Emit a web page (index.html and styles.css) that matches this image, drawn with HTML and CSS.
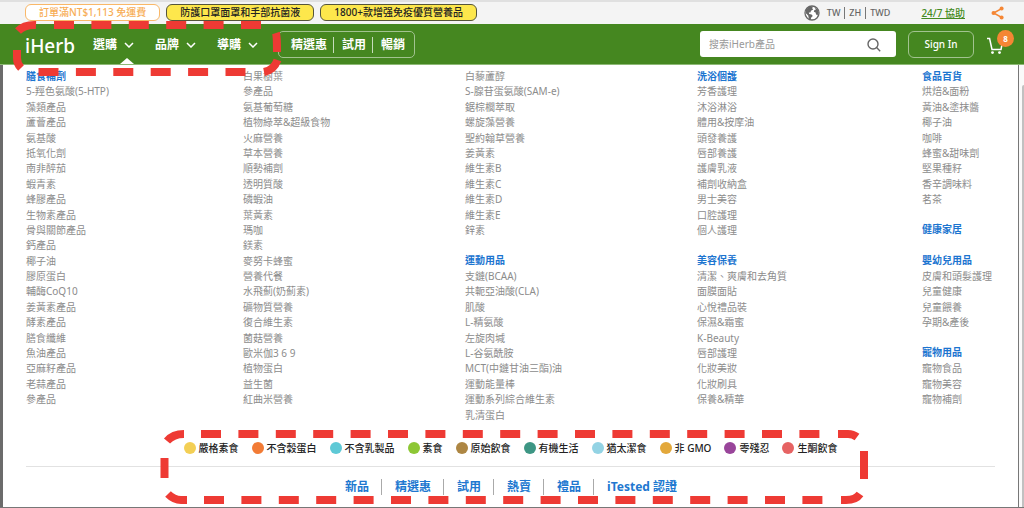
FILE: index.html
```html
<!DOCTYPE html>
<html lang="zh-Hant">
<head>
<meta charset="utf-8">
<title>iHerb</title>
<link rel="stylesheet" href="styles.css">
</head>
<body>
<div class="topbar">
  <div class="promos">
    <a class="pill pill-plain" href="#">訂單滿NT$1,113 免運費</a>
    <a class="pill" href="#">防護口罩面罩和手部抗菌液</a>
    <a class="pill" href="#">1800+款增强免疫優質營養品</a>
  </div>
  <div class="utility">
    <button class="locale" type="button">
      <svg class="globe" viewBox="0 0 16 16" aria-hidden="true"><circle cx="8" cy="8" r="7" fill="#fff" stroke="#666" stroke-width="1.3"/><path d="M2 4.5 5 1.8 9 1.4 8.2 3.2 9.2 4.6 7 5.8 6.4 7.4 4.8 7.6 5.2 9 7.6 9.4 8.8 11 7.2 12.6 6.6 15 4.8 13.4 4.2 10.6 1.6 8Z" fill="#666"/><path d="M10.2 2.2 13.6 4.2 14.8 7.6 13.4 10.6 12 9.2 11.6 7.6 9.8 6.8 10.4 5 12 4.4Z" fill="#666"/></svg>
      <span>TW</span><span>ZH</span><span>TWD</span>
    </button>
    <a class="help" href="#">24/7 協助</a>
    <button class="icon-btn" type="button" aria-label="分享">
      <svg class="share" viewBox="0 0 13 14" aria-hidden="true"><path d="M10.6 2.6 2.6 7l8 4.4" fill="none" stroke="#f58634" stroke-width="1.6"/><circle cx="10.6" cy="2.6" r="2" fill="#f58634"/><circle cx="2.6" cy="7" r="2.1" fill="#f58634"/><circle cx="10.6" cy="11.4" r="2" fill="#f58634"/></svg>
    </button>
  </div>
</div>

<header class="header">
  <a class="logo" href="#">iHerb<span class="dot"></span></a>
  <nav class="nav">
    <button class="nav-item active" type="button">選購<svg viewBox="0 0 10 6" aria-hidden="true"><path d="m1 1 4 4 4-4"/></svg></button>
    <button class="nav-item" type="button">品牌<svg viewBox="0 0 10 6" aria-hidden="true"><path d="m1 1 4 4 4-4"/></svg></button>
    <button class="nav-item" type="button">導購<svg viewBox="0 0 10 6" aria-hidden="true"><path d="m1 1 4 4 4-4"/></svg></button>
  </nav>
  <div class="quick"><a href="#">精選惠</a><a href="#">試用</a><a href="#">暢銷</a></div>
  <form class="search">
    <input type="text" placeholder="搜索iHerb產品" aria-label="搜索iHerb產品">
    <button class="icon-btn" type="button" aria-label="搜索"><svg class="lens" viewBox="0 0 14 14" aria-hidden="true"><circle cx="6" cy="6" r="5"/><path d="m9.6 9.6 3.6 3.6"/></svg></button>
  </form>
  <button class="signin" type="button">Sign In</button>
  <a class="cart" href="#" aria-label="購物車">
    <svg viewBox="0 0 16 18" aria-hidden="true"><path d="M0 1.500h2.600L5 12.500h9l1.400-7" fill="none" stroke="#fff" stroke-width="1.500"/><circle cx="5.500" cy="15.600" r="1.400" fill="#fff"/><circle cx="12.500" cy="15.600" r="1.400" fill="#fff"/></svg>
    <span class="badge">8</span>
  </a>
</header>

<main class="stage">
  <div class="panel">
    <div class="menu">
      <ul class="col">
        <li class="title"><a href="#">膳食補劑</a></li><li><a href="#">5-羥色氨酸(5-HTP)</a></li><li><a href="#">藻類產品</a></li><li><a href="#">蘆薈產品</a></li><li><a href="#">氨基酸</a></li><li><a href="#">抵氧化劑</a></li><li><a href="#">南非醉茄</a></li><li><a href="#">蝦青素</a></li><li><a href="#">蜂膠產品</a></li><li><a href="#">生物素產品</a></li><li><a href="#">骨與關節產品</a></li><li><a href="#">鈣產品</a></li><li><a href="#">椰子油</a></li><li><a href="#">膠原蛋白</a></li><li><a href="#">輔酶CoQ10</a></li><li><a href="#">姜黃素產品</a></li><li><a href="#">酵素產品</a></li><li><a href="#">膳食纖維</a></li><li><a href="#">魚油產品</a></li><li><a href="#">亞麻籽產品</a></li><li><a href="#">老蒜產品</a></li><li><a href="#">參產品</a></li>
      </ul>
      <ul class="col">
        <li><a href="#">白果樹葉</a></li><li><a href="#">參產品</a></li><li><a href="#">氨基葡萄糖</a></li><li><a href="#">植物綠萃&amp;超級食物</a></li><li><a href="#">火麻營養</a></li><li><a href="#">草本營養</a></li><li><a href="#">順勢補劑</a></li><li><a href="#">透明質酸</a></li><li><a href="#">磷蝦油</a></li><li><a href="#">葉黃素</a></li><li><a href="#">瑪咖</a></li><li><a href="#">鎂素</a></li><li><a href="#">麥努卡蜂蜜</a></li><li><a href="#">營養代餐</a></li><li><a href="#">水飛薊(奶薊素)</a></li><li><a href="#">礦物質營養</a></li><li><a href="#">復合維生素</a></li><li><a href="#">菌菇營養</a></li><li><a href="#">歐米伽3 6 9</a></li><li><a href="#">植物蛋白</a></li><li><a href="#">益生菌</a></li><li><a href="#">紅曲米營養</a></li>
      </ul>
      <ul class="col">
        <li><a href="#">白藜蘆醇</a></li><li><a href="#">S-腺苷蛋氨酸(SAM-e)</a></li><li><a href="#">鋸棕櫚萃取</a></li><li><a href="#">螺旋藻營養</a></li><li><a href="#">聖約翰草營養</a></li><li><a href="#">姜黃素</a></li><li><a href="#">維生素B</a></li><li><a href="#">維生素C</a></li><li><a href="#">維生素D</a></li><li><a href="#">維生素E</a></li><li><a href="#">鋅素</a></li>
        <li class="title"><a href="#">運動用品</a></li><li><a href="#">支鏈(BCAA)</a></li><li><a href="#">共軛亞油酸(CLA)</a></li><li><a href="#">肌酸</a></li><li><a href="#">L-精氨酸</a></li><li><a href="#">左旋肉堿</a></li><li><a href="#">L-谷氨酰胺</a></li><li><a href="#">MCT(中鏈甘油三酯)油</a></li><li><a href="#">運動能量棒</a></li><li><a href="#">運動系列綜合維生素</a></li><li><a href="#">乳清蛋白</a></li>
      </ul>
      <ul class="col">
        <li class="title"><a href="#">洗浴個護</a></li><li><a href="#">芳香護理</a></li><li><a href="#">沐浴淋浴</a></li><li><a href="#">體用&amp;按摩油</a></li><li><a href="#">頭發養護</a></li><li><a href="#">唇部養護</a></li><li><a href="#">護膚乳液</a></li><li><a href="#">補劑收納盒</a></li><li><a href="#">男士美容</a></li><li><a href="#">口腔護理</a></li><li><a href="#">個人護理</a></li>
        <li class="title"><a href="#">美容保養</a></li><li><a href="#">清潔、爽膚和去角質</a></li><li><a href="#">面膜面貼</a></li><li><a href="#">心悅禮品裝</a></li><li><a href="#">保濕&amp;霜蜜</a></li><li><a href="#">K-Beauty</a></li><li><a href="#">唇部護理</a></li><li><a href="#">化妝美妝</a></li><li><a href="#">化妝刷具</a></li><li><a href="#">保養&amp;精華</a></li>
      </ul>
      <ul class="col">
        <li class="title"><a href="#">食品百貨</a></li><li><a href="#">烘焙&amp;面粉</a></li><li><a href="#">黃油&amp;塗抹醬</a></li><li><a href="#">椰子油</a></li><li><a href="#">咖啡</a></li><li><a href="#">蜂蜜&amp;甜味劑</a></li><li><a href="#">堅果種籽</a></li><li><a href="#">香辛調味料</a></li><li><a href="#">茗茶</a></li>
        <li class="title"><a href="#">健康家居</a></li>
        <li class="title"><a href="#">嬰幼兒用品</a></li><li><a href="#">皮膚和頭髮護理</a></li><li><a href="#">兒童健康</a></li><li><a href="#">兒童餵養</a></li><li><a href="#">孕期&amp;產後</a></li>
        <li class="title"><a href="#">寵物用品</a></li><li><a href="#">寵物食品</a></li><li><a href="#">寵物美容</a></li><li><a href="#">寵物補劑</a></li>
      </ul>
    </div>
    <ul class="diets">
      <li class="vegan"><a href="#">嚴格素食</a></li><li class="gluten"><a href="#">不含穀蛋白</a></li><li class="dairy"><a href="#">不含乳製品</a></li><li class="veg"><a href="#">素食</a></li><li class="paleo"><a href="#">原始飲食</a></li><li class="organic"><a href="#">有機生活</a></li><li class="kosher"><a href="#">猶太潔食</a></li><li class="gmo"><a href="#">非 GMO</a></li><li class="cruelty"><a href="#">零殘忍</a></li><li class="keto"><a href="#">生酮飲食</a></li>
    </ul>
    <nav class="links"><a href="#">新品</a><a href="#">精選惠</a><a href="#">試用</a><a href="#">熱賣</a><a href="#">禮品</a><a href="#">iTested 認證</a></nav>
  </div>
  <div class="scroll"></div>
</main>

<svg class="marks" width="1024" height="508" viewBox="0 0 1024 508" aria-hidden="true">
  <path d="M18 31Q24 24.500 36 25"/>
  <path class="dash" d="M54 25H262"/>
  <path d="M276 33Q277 36 277 52M277.500 60Q274 70 264 72M17 50V58Q17 64 21 68"/>
  <path class="dash" d="M38.500 72H246"/>
  <path d="M167 441Q173 434 184 434M838 434H848Q853 434 857 437M864 451V479M860 494Q856 500 846 500H841M187 500H181Q174 500 168 494M164.500 458V478"/>
  <path class="dash" d="M201 434H821"/>
  <path class="dash" d="M204 500H824"/>
</svg>
</body>
</html>
```
FILE: styles.css
```css
* { box-sizing: border-box; }
body {
  margin: 0;
  min-height: 100vh;
  display: flex;
  flex-direction: column;
  position: relative;
  background: #fff;
  color: #222;
  font: 10px/14px "Noto Sans", "Noto Sans CJK TC", sans-serif;
}
a { color: inherit; text-decoration: none; }
button { font: inherit; color: inherit; background: none; border: 0; padding: 0; }
svg { display: block; flex: none; }
ul { list-style: none; margin: 0; padding: 0; }

.topbar {
  height: 24px;
  padding: 2px 20px 0 25px;
  border-top: 2px solid #e0e0e0;
  background: #f4f4f4;
  display: flex;
  align-items: flex-start;
  justify-content: space-between;
}
.promos { display: flex; gap: 6px; }
.pill {
  height: 17px;
  padding: 0 13px;
  border: 1px solid #55553a;
  border-radius: 6px;
  background: #fde74c;
  color: #222;
  font-weight: 500;
  line-height: 15px;
}
.pill-plain { border-color: #f9b869; background: #fff; color: #f7ad55; }
.utility { display: flex; align-items: center; height: 17px; color: #666; }
.locale { display: flex; align-items: center; font-size: 9px; font-weight: 500; line-height: 12px; }
.globe { width: 16px; height: 16px; margin-right: 3px; }
.locale span { padding: 0 4px; }
.locale span + span { border-left: 1px solid #777; }
.help { margin: 0 26px 0 27px; color: #458b22; font-weight: 500; text-decoration: underline; }
.share { width: 13px; height: 14px; }

.header {
  height: 41px;
  padding: 0 21px 0 25px;
  background: #458720;
  border-bottom: 1px solid #8db975;
  color: #fff;
  display: flex;
  align-items: center;
}
.logo { display: flex; width: 50px; font-size: 19px; font-weight: 500; line-height: 26px; padding-top: 4px; }
.dot { width: 1px; height: 1px; margin-top: 4px; background: #fff; }
.nav { display: flex; gap: 21px; align-self: stretch; margin-left: 18px; }
.nav-item {
  position: relative;
  display: flex;
  align-items: center;
  gap: 7px;
  padding-top: 2px;
  font-size: 12px;
  font-weight: 700;
}
.nav-item svg { width: 10px; height: 6px; fill: none; stroke: #fff; stroke-width: 1.5; }
.active::after {
  content: "";
  position: absolute;
  right: 0;
  bottom: 0;
  border: 7px solid transparent;
  border-top: 0;
  border-bottom: 6px solid #fff;
}
.quick {
  display: flex;
  align-items: center;
  height: 27px;
  margin-left: 20px;
  padding: 1px 3px 0 4px;
  border: 1px solid #a2c390;
  border-radius: 5px;
  font-size: 12px;
  font-weight: 700;
}
.quick a { padding: 0 6px 0 8px; line-height: 16px; }
.quick a + a { border-left: 1px solid #c7dcbc; }
.search {
  display: flex;
  align-items: center;
  width: 196px;
  height: 26px;
  margin-left: auto;
  padding: 0 15px 0 9px;
  border-radius: 3px;
  background: #fff;
}
.search input {
  flex: 1;
  min-width: 0;
  padding: 0;
  border: 0;
  outline: 0;
  font: inherit;
}
.search input::placeholder { color: #999; }
.lens { width: 14px; height: 14px; margin-top: 2px; fill: none; stroke: #666; stroke-width: 1.4; }
.signin {
  width: 66px;
  height: 27px;
  margin-left: 12px;
  border: 1px solid #a2c390;
  border-radius: 6px;
  font-weight: 500;
}
.cart { position: relative; margin-left: 13px; }
.cart svg { width: 16px; height: 18px; margin-top: 3px; }
.badge {
  position: absolute;
  top: -4px;
  left: 10px;
  width: 17px;
  height: 17px;
  border-radius: 50%;
  background: #f58634;
  font-size: 8px;
  font-weight: 700;
  line-height: 17px;
  text-align: center;
}

.stage { flex: 1; display: flex; border-bottom: 1px solid #777; background: #fafafa; }
.panel {
  flex: 1;
  padding: 4px 23px 0;
  border-left: 3px solid #6b6b6b;
  border-right: 1px solid #777;
  background: #fff;
}
.scroll { width: 5px; padding-top: 20px; }
.scroll::after { content: ""; display: block; height: 100%; margin-left: 3px; border-radius: 3px 0 0 0; background: #c1c1c1; }
.menu {
  display: grid;
  grid-template-columns: 217fr 222fr 232fr 225fr 73fr;
  min-height: 354px;
  color: #8c8c8c;
}
.col { display: grid; grid-template-rows: repeat(23, 1fr); white-space: nowrap; }
.title { color: #1c75d0; font-weight: 700; }
li + .title { grid-row: span 2; align-self: end; padding-bottom: 2px; }
.diets {
  display: flex;
  justify-content: center;
  gap: 13px;
  margin-top: 18px;
  padding-bottom: 11px;
  border-bottom: 1px solid #e2e2e2;
  font-weight: 500;
  white-space: nowrap;
}
.diets li { display: flex; align-items: center; gap: 3px; }
.diets li::before { content: ""; width: 12px; height: 12px; border-radius: 50%; background: currentColor; }
.diets a { color: #222; }
.vegan { color: #f3cf55; }
.gluten { color: #f27b35; }
.dairy { color: #5ec9d6; }
.veg { color: #8dc735; }
.paleo { color: #ad8643; }
.organic { color: #3d9684; }
.kosher { color: #93d3e4; }
.gmo { color: #e3a83b; }
.cruelty { color: #99459a; }
.keto { color: #e66363; }
.links { display: flex; justify-content: center; padding-top: 12px; color: #2077d0; font-size: 12px; font-weight: 700; line-height: 16px; }
.links a { padding: 0 12px 0 13px; }
.links a + a { border-left: 1px solid #aaa; }

.marks { position: absolute; top: 0; left: 0; pointer-events: none; fill: none; stroke: #ee3a34; stroke-width: 8; }
.dash { stroke-dasharray: 20 17.4; }
```
